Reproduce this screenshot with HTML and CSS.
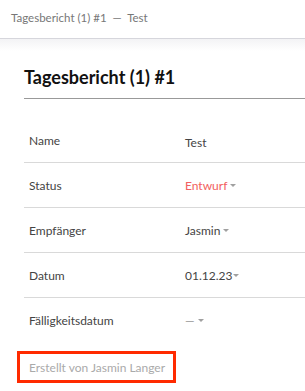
FILE: index.html
```html
<!DOCTYPE html>
<html lang="de">
<head>
  <meta charset="UTF-8" />
  <meta name="viewport" content="width=device-width, initial-scale=1.0" />
  <title>Tagesbericht (1) #1</title>
  <link rel="stylesheet" href="styles.css">
</head>
<body>
  <div class="topbar">Tagesbericht (1) #1 &nbsp;— &nbsp;Test</div>
  <div class="content">
    <h1 class="title">Tagesbericht (1) #1</h1>
    <div class="fields">
      <div class="row">
        <div class="label">Name</div>
        <div class="value name-value">Test</div>
      </div>
      <div class="row">
        <div class="label">Status</div>
        <div class="value status">Entwurf<span class="caret"></span></div>
      </div>
      <div class="row">
        <div class="label">Empfänger</div>
        <div class="value">Jasmin<span class="caret"></span></div>
      </div>
      <div class="row">
        <div class="label">Datum</div>
        <div class="value">01.12.23<span class="caret tight"></span></div>
      </div>
      <div class="row last">
        <div class="label">Fälligkeitsdatum</div>
        <div class="value dash">—<span class="caret"></span></div>
      </div>
    </div>
    <div class="created">Erstellt von Jasmin Langer</div>
  </div>
</body>
</html>
```

FILE: styles.css
```css
body {
  margin: 0;
  font-family: Lato, "Liberation Sans", sans-serif;
  background: #fff;
  color: #333;
  overflow: hidden;
}

.topbar {
  height: 38px;
  line-height: 36px;
  padding-left: 11px;
  font-size: 11.5px;
  color: #777;
  border-bottom: 1px solid #d6d6dc;
  position: relative;
}
.topbar::after {
  content: "";
  position: absolute;
  left: 0;
  right: 0;
  top: 39px;
  height: 12px;
  background: linear-gradient(#f3f3f5, rgba(255,255,255,0));
}

.content {
  padding-left: 24px;
}
.title {
  margin: 0;
  height: 60px;
  line-height: 76px;
  font-size: 18px;
  font-weight: bold;
  color: #111;
  border-bottom: 1px solid #999;
  box-sizing: border-box;
}
.fields {
  margin-top: 19px;
}
.row {
  display: flex;
  align-items: center;
  height: 44px;
  border-bottom: 1px solid #d9d9d9;
  font-size: 12px;
}
.row.last {
  border-bottom: none;
}
.label {
  width: 156px;
  padding-left: 5px;
  color: #444;
}
.value {
  color: #444;
  display: flex;
  align-items: center;
}
.name-value {
  padding-top: 4px;
}
.status {
  color: #f26060;
}
.dash {
  color: #999;
}
.caret {
  display: inline-block;
  margin-left: 3px;
  border-left: 3.5px solid transparent;
  border-right: 3.5px solid transparent;
  border-top: 3.5px solid #a0a0a0;
}
.caret.tight {
  margin-left: 1px;
}
.created {
  display: inline-block;
  margin: 9px 0 0 -7px;
  padding: 6px 8px 5px 9px;
  border: 3px solid #ff2a00;
  font-size: 12px;
  color: #aaa;
}
```
